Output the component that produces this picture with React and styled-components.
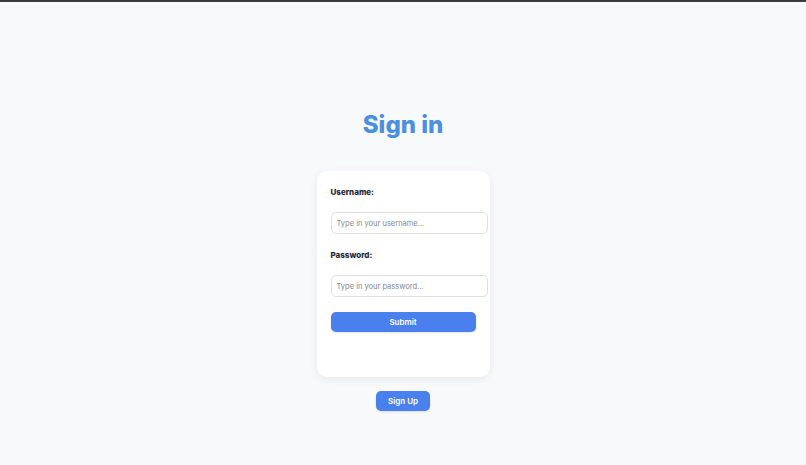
import React, { useState } from "react";
import styled, { createGlobalStyle } from "styled-components";

const GlobalStyle = createGlobalStyle`
  * {
    box-sizing: border-box;
  }

  html,
  body {
    margin: 0;
    padding: 0;
    background-color: #f8f9fb;
  }

  body {
    border-top: 2px solid #3a3b3d;
    min-height: 100vh;
    font-family: Inter, "Liberation Sans", sans-serif;
  }
`;

function App() {
  const [username, setUsername] = useState("");
  const [password, setPassword] = useState("");

  return (
    <>
      <GlobalStyle />
      <Page>
        <Title>Sign in</Title>
        <Card>
          <Field>
            <Label htmlFor="username">Username:</Label>
            <Input
              id="username"
              type="text"
              placeholder="Type in your username..."
              value={username}
              onChange={(e) => setUsername(e.target.value)}
            />
          </Field>
          <Field>
            <Label htmlFor="password">Password:</Label>
            <Input
              id="password"
              type="password"
              placeholder="Type in your password..."
              value={password}
              onChange={(e) => setPassword(e.target.value)}
            />
          </Field>
          <Button $wide>Submit</Button>
        </Card>
        <Button>Sign Up</Button>
      </Page>
    </>
  );
}

export default App;

const Page = styled.div`
  display: flex;
  flex-direction: column;
  align-items: center;
  padding-top: 108px;
`;

const Title = styled.h1`
  margin: 0 0 31px;
  font-family: Inter, "Noto Sans", sans-serif;
  font-size: 24px;
  line-height: 30px;
  font-weight: 800;
  color: #4a90e2;
`;

const Card = styled.div`
  width: 173px;
  background-color: #ffffff;
  border-radius: 10px;
  box-shadow: 0 2px 8px rgba(30, 40, 60, 0.08);
  padding: 15px 14px 45px;
  margin-bottom: 14px;
  display: flex;
  flex-direction: column;
  row-gap: 15px;
`;

const Field = styled.div`
  display: flex;
  flex-direction: column;
  row-gap: 14px;
`;

const Label = styled.label`
  font-family: Inter, sans-serif;
  font-size: 8px;
  line-height: 12px;
  font-weight: 800;
  color: #23263a;
`;

const Input = styled.input`
  box-sizing: content-box;
  width: 100%;
  height: 20px;
  padding: 0 5px;
  border: 1px solid #dcdfe4;
  border-radius: 5px;
  background-color: #ffffff;
  font-family: Inter, sans-serif;
  font-size: 7.5px;
  color: #333;
  outline: none;

  &::placeholder {
    color: #85878c;
  }
`;

const Button = styled.button`
  width: ${(p) => (p.$wide ? "100%" : "54px")};
  height: 20px;
  border: none;
  border-radius: 5px;
  background-color: #4a80ee;
  color: #ffffff;
  font-family: Inter, sans-serif;
  font-size: 8px;
  font-weight: 600;
  cursor: pointer;
  box-shadow: 0 1px 2px rgba(40, 80, 180, 0.15);
`;
